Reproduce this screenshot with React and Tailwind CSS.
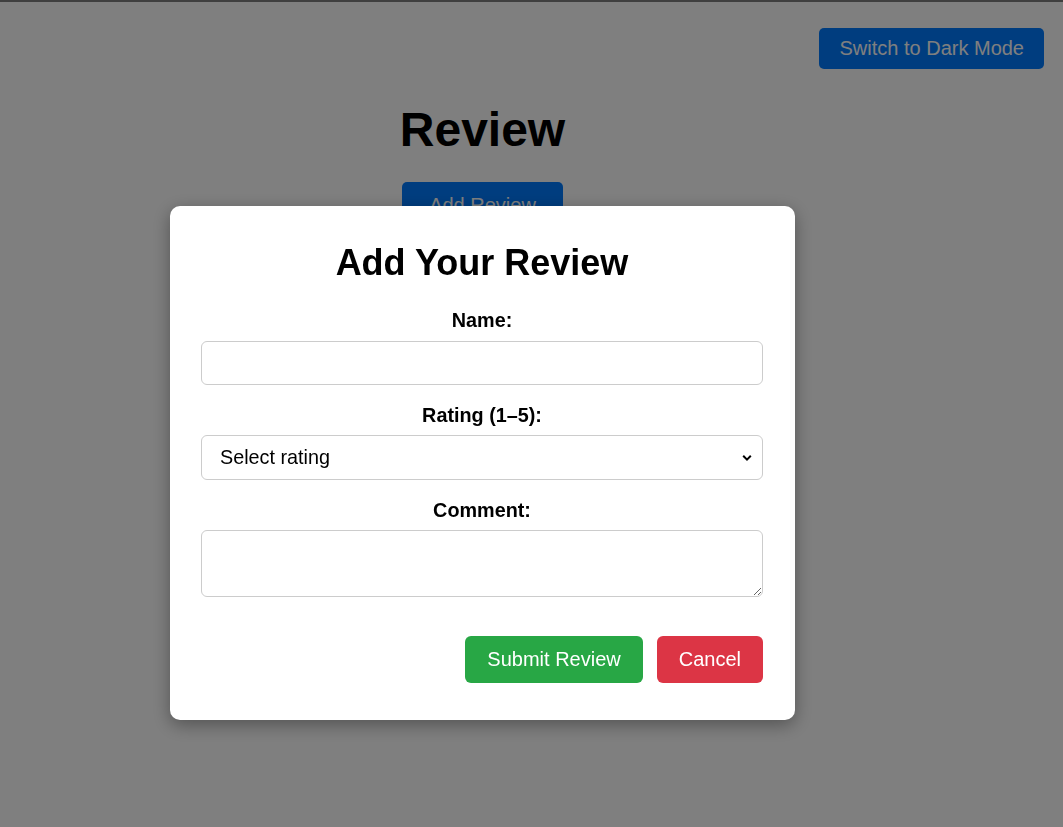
import { useState } from 'react';

const App = () => {
  const [showModal, setShowModal] = useState(true);
  const [form, setForm] = useState({ name: '', rating: '', comment: '' });

  return (
    <div className="relative min-h-screen bg-white font-['Liberation_Sans',Arial,sans-serif] text-black">
      <div className="h-[2px] bg-[#7f7f7f]" />

      {/* Theme toggle */}
      <div className="flex justify-end pt-[26px] pr-[19px]">
        <button className="h-[41px] px-[20px] rounded-[5px] bg-[#007bff] text-white text-[20px] leading-[23px]">
          Switch to Dark Mode
        </button>
      </div>

      {/* Page content */}
      <div className="w-[965px] flex flex-col items-center">
        <h1 className="mt-[33px] text-[48px] leading-[55px] font-bold">Review</h1>
        <button
          onClick={() => setShowModal(true)}
          className="mt-[25px] h-[47px] px-[27px] rounded-[5px] bg-[#007bff] text-white text-[20px] leading-[23px]"
        >
          Add Review
        </button>
      </div>

      {/* Modal */}
      {showModal && (
        <div className="fixed inset-0 z-10 bg-[rgba(0,0,0,0.5)] flex items-center justify-center pr-[98px] pt-[99px]">
          <div className="w-[625px] bg-white rounded-[10px] pl-[31px] pr-[32px] pt-[37px] pb-[37px] shadow-[0_5px_18px_rgba(0,0,0,0.35)]">
            <h2 className="text-center text-[36px] leading-[40px] font-bold">Add Your Review</h2>

            <form onSubmit={(e) => e.preventDefault()} className="flex flex-col">
              <label className="mt-[26px] block text-center text-[19.8px] leading-[23px] font-bold">Name:</label>
              <input
                type="text"
                value={form.name}
                onChange={(e) => setForm({ ...form, name: e.target.value })}
                className="mt-[9px] h-[44px] w-full rounded-[6px] border border-[#cccccc] px-[14px] text-[19.8px]"
              />

              <label className="mt-[19px] block text-center text-[19.8px] leading-[23px] font-bold">Rating (1–5):</label>
              <div className="relative mt-[8px]">
                <select
                  value={form.rating}
                  onChange={(e) => setForm({ ...form, rating: e.target.value })}
                  className="h-[45px] w-full appearance-none rounded-[6px] border border-[#cccccc] bg-white pl-[18px] pr-[36px] text-[19.8px]"
                >
                  <option value="">Select rating</option>
                  <option value="1">1</option>
                  <option value="2">2</option>
                  <option value="3">3</option>
                  <option value="4">4</option>
                  <option value="5">5</option>
                </select>
                <svg
                  className="pointer-events-none absolute right-[11px] top-1/2 -translate-y-1/2"
                  width="10"
                  height="7"
                  viewBox="0 0 10 7"
                >
                  <path d="M1.2 1.3 L5 5.1 L8.8 1.3" fill="none" stroke="#000" strokeWidth="2" />
                </svg>
              </div>

              <label className="mt-[19px] block text-center text-[19.8px] leading-[23px] font-bold">Comment:</label>
              <textarea
                value={form.comment}
                onChange={(e) => setForm({ ...form, comment: e.target.value })}
                className="mt-[8px] h-[67px] w-full rounded-[6px] border border-[#cccccc] px-[14px] py-[8px] text-[19.8px]"
              />

              <div className="mt-[39px] flex justify-end gap-[14px]">
                <button type="submit" className="h-[47px] px-[22px] rounded-[6px] bg-[#28a745] text-white text-[20px] leading-[23px]">
                  Submit Review
                </button>
                <button
                  type="button"
                  onClick={() => setShowModal(false)}
                  className="h-[47px] px-[22px] rounded-[6px] bg-[#dc3545] text-white text-[20px] leading-[23px]"
                >
                  Cancel
                </button>
              </div>
            </form>
          </div>
        </div>
      )}
    </div>
  );
};

export default App;
